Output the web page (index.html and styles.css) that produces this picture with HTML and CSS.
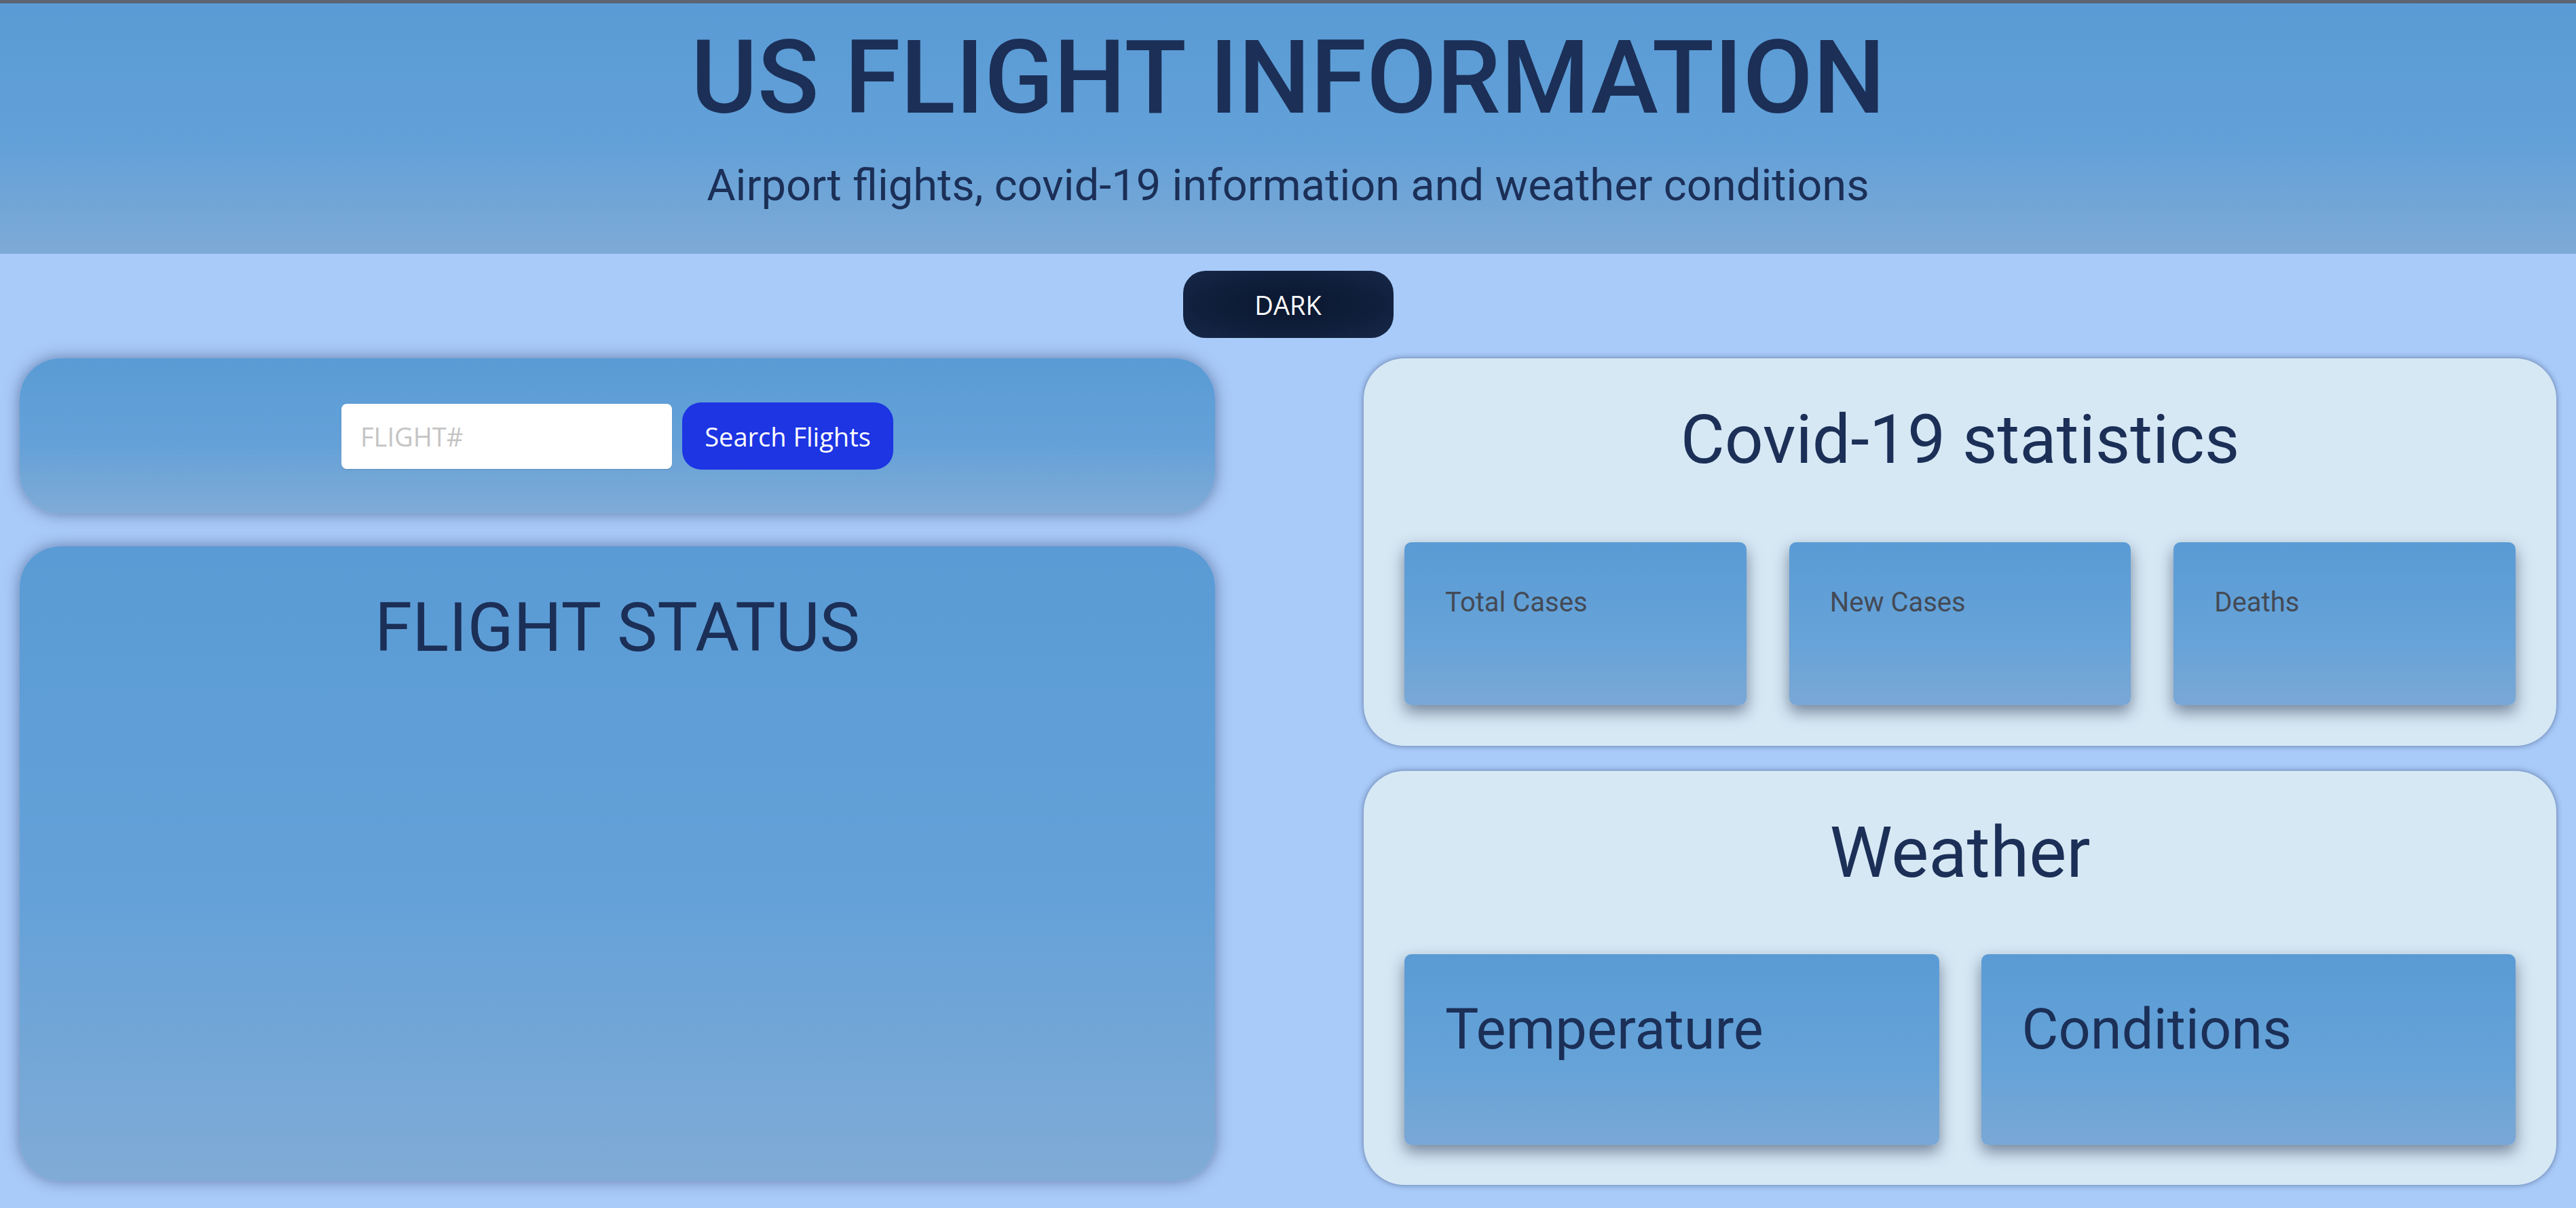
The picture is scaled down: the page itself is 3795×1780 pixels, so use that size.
FILE: index.html
```html
<!DOCTYPE html>
<html lang="en">
<head>
<meta charset="utf-8">
<title>US Flight Information</title>
<link rel="stylesheet" href="styles.css">
</head>
<body>
<header class="site-header">
  <h1 class="site-title">US FLIGHT INFORMATION</h1>
  <p class="site-subtitle">Airport flights, covid-19 information and weather conditions</p>
</header>
<div class="mode-row">
  <button class="mode-btn" type="button">DARK</button>
</div>
<main class="layout">
  <section class="col col-left">
    <div class="card card-blue search-card">
      <input class="flight-input" type="text" placeholder="FLIGHT#">
      <button class="search-btn" type="button">Search Flights</button>
    </div>
    <div class="card card-blue status-card">
      <h2 class="card-title">FLIGHT STATUS</h2>
    </div>
  </section>
  <section class="col col-right">
    <div class="card card-light covid-card">
      <h2 class="card-title">Covid-19 statistics</h2>
      <div class="tiles tiles-3">
        <div class="tile"><span class="tile-label small">Total Cases</span></div>
        <div class="tile"><span class="tile-label small">New Cases</span></div>
        <div class="tile"><span class="tile-label small">Deaths</span></div>
      </div>
    </div>
    <div class="card card-light weather-card">
      <h2 class="card-title">Weather</h2>
      <div class="tiles tiles-2">
        <div class="tile tile-tall"><span class="tile-label big">Temperature</span></div>
        <div class="tile tile-tall"><span class="tile-label big">Conditions</span></div>
      </div>
    </div>
  </section>
</main>
</body>
</html>
```

FILE: styles.css
```css
* { box-sizing: border-box; }

html, body {
  margin: 0;
  padding: 0;
}

body {
  background: #a9cbf9;
  font-family: Roboto, "Open Sans", sans-serif;
  color: #1b2f57;
  min-height: 1780px;
}

.site-header {
  height: 374px;
  border-top: 5px solid #5b6573;
  background: linear-gradient(180deg, #5a9bd5 0%, #62a0d8 55%, #7eaad6 100%);
  text-align: center;
  padding-top: 35px;
}

.site-title {
  margin: 0;
  font-size: 150px;
  font-weight: 500;
  line-height: 1;
  color: #1b2f57;
}

.site-subtitle {
  margin: 51px 0 0;
  font-size: 65px;
  font-weight: 400;
  line-height: 1;
  color: #1b2f57;
}

.mode-row {
  display: flex;
  justify-content: center;
  padding-top: 25px;
}

.mode-btn {
  width: 310px;
  height: 99px;
  border: none;
  border-radius: 33px;
  background: radial-gradient(ellipse at center, #0a1730 0%, #101f3b 60%, #17284a 100%);
  color: #ffffff;
  font-family: "Open Sans", "Noto Sans", sans-serif;
  font-size: 38px;
  padding: 0;
}

.layout {
  display: grid;
  grid-template-columns: 1761px 1757px;
  justify-content: space-between;
  padding: 30px 29px 0;
}

.col {
  display: flex;
  flex-direction: column;
}

.col-left { gap: 48px; }
.col-right { gap: 37px; }

.card {
  border-radius: 60px;
}

.card-blue {
  background: linear-gradient(180deg, #5a9bd5 0%, #64a1d8 55%, #80abd6 100%);
  box-shadow: 0 0 22px rgba(40, 55, 100, 0.55);
}

.card-light {
  background: #d6e8f4;
  box-shadow: 0 0 8px rgba(30, 45, 90, 0.55);
  padding: 70px 60px 60px;
}

.search-card {
  height: 229px;
  display: flex;
  align-items: center;
  justify-content: center;
  gap: 15px;
}

.flight-input {
  width: 487px;
  height: 96px;
  border: none;
  border-radius: 8px;
  background: #ffffff;
  padding: 0 28px;
  font-family: "Open Sans", "Noto Sans", sans-serif;
  font-size: 38px;
  color: #333;
  outline: none;
  box-shadow: 0 1px 2px rgba(0, 0, 0, 0.15);
}

.flight-input::placeholder {
  color: #c4c4c4;
}

.search-btn {
  width: 311px;
  height: 99px;
  border: none;
  border-radius: 28px;
  background: #1d35e3;
  color: #ffffff;
  font-family: "Open Sans", "Noto Sans", sans-serif;
  font-size: 38px;
  padding: 0;
}

.status-card {
  height: 935px;
  padding-top: 70px;
  text-align: center;
}

.card-title {
  margin: 0;
  font-size: 100px;
  font-weight: 400;
  line-height: 1;
  text-align: center;
  color: #1b2f57;
}

.covid-card { height: 571px; }
.weather-card { height: 610px; padding-top: 69px; }

.weather-card .card-title { font-size: 104px; }
.weather-card .tiles { margin-top: 97px; }

.tiles {
  display: grid;
  margin-top: 101px;
}

.tiles-3 {
  grid-template-columns: repeat(3, 1fr);
  column-gap: 63px;
}

.tiles-2 {
  grid-template-columns: repeat(2, 1fr);
  column-gap: 62px;
}

.tile {
  height: 240px;
  border-radius: 10px;
  background: linear-gradient(180deg, #5a9bd5 0%, #66a3d8 60%, #7aa8d6 100%);
  box-shadow: 0 10px 22px rgba(20, 35, 70, 0.5);
  padding: 60px;
}

.tile-tall {
  height: 281px;
}

.tile-label {
  display: block;
  line-height: 1;
}

.tile-label.small {
  font-size: 40px;
  color: #444a55;
  padding-top: 9px;
}

.tile-label.big {
  font-size: 83px;
  color: #1b2f57;
  padding-top: 9px;
}
```
